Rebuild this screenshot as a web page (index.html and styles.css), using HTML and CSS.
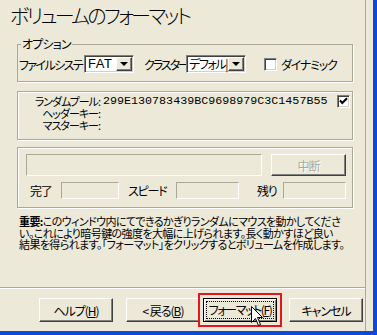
FILE: index.html
```html
<!DOCTYPE html>
<html lang="ja">
<head>
    <meta charset="UTF-8">
    <meta name="viewport" content="width=device-width, initial-scale=1.0">
    <title>ボリュームのフォーマット</title>
    <link rel="stylesheet" href="styles.css">
</head>
<body>
    <div class="window">
        <div class="page">
            <h1 class="title">ボリュームのフォーマット</h1>

            <fieldset class="options">
                <legend>オプション</legend>
                <div class="opt-row">
                    <span class="fs-lbl">ファイルシステ</span>
                    <div class="combo fat"><span class="combo-text latin">FAT</span><span class="combo-btn"></span></div>
                    <span class="cl-lbl">クラスター</span>
                    <div class="combo cluster"><span class="combo-text">デフォル|</span><span class="combo-btn"></span></div>
                    <span class="check dyn"></span>
                    <span class="dyn-lbl">ダイナミック</span>
                </div>
            </fieldset>

            <div class="group pool">
                <span class="key">ランダムプール:</span>
                <span class="hex">299E130783439BC9698979C3C1457B55</span>
                <span class="check">
                    <svg width="11" height="11" viewBox="0 0 11 11"><path d="M2 4.5 L4.3 7 L9 2.2" fill="none" stroke="#000" stroke-width="2"/></svg>
                </span>
                <span class="key">ヘッダーキー:</span>
                <span class="hex"></span>
                <span></span>
                <span class="key">マスターキー:</span>
                <span class="hex"></span>
                <span></span>
            </div>

            <div class="group progress">
                <div class="prog-row">
                    <div class="field bar"></div>
                    <button class="btn stop" disabled>中断</button>
                </div>
                <div class="stat-row">
                    <span class="stat-lbl done">完了</span>
                    <div class="field f-done"></div>
                    <span class="stat-lbl speed">スピード</span>
                    <div class="field f-speed"></div>
                    <span class="stat-lbl left">残り</span>
                    <div class="field f-left"></div>
                </div>
            </div>

            <p class="note"><span class="strong">重要:</span>このウィンドウ内にてできるかぎりランダムにマウスを動かしてくださ<br>い。これにより暗号鍵の強度を大幅に上げられます。長く動かすほど良い<br>結果を得られます。「フォーマット」をクリックするとボリュームを作成します。</p>

            <div class="footer">
                <button class="btn help">ヘルプ(<u>H</u>)</button>
                <button class="btn back">&lt; 戻る(<u>B</u>)</button>
                <button class="btn format"><span class="focus">フォーマット(<u>F</u>)</span></button>
                <button class="btn cancel">キャンセル</button>
            </div>
        </div>

        <svg class="cursor" width="13" height="21" viewBox="0 0 13 21">
            <path d="M0.5 0.5 L0.5 16.5 L4.5 12.5 L7.5 19.5 L9.5 18.5 L6.5 11.5 L11.5 11.5 Z" fill="#fff" stroke="#000" stroke-width="1"/>
        </svg>
    </div>
</body>
</html>
```

FILE: styles.css
```css
*{
    margin: 0px;
    padding: 0px;
    box-sizing: border-box;
}
body{
    font-family: "Noto Sans CJK JP", sans-serif;
    font-size: 12px;
    font-feature-settings: "palt";
    color: #000;
    background: #ECE9D8;
}
.window{
    position: relative;
    width: 377px;
    height: 335px;
    display: flex;
    background: #ECE9D8;
    border-right: 4px solid #0c4ad9;
    border-bottom: 4px solid #0c4ad9;
}
.page{
    width: 366px;
    height: 100%;
    display: flex;
    flex-direction: column;
    border-right: 1px solid #ACA899;
}
.title{
    font-size: 20px;
    font-weight: 300;
    line-height: 26px;
    padding: 3px 0 0 10px;
    letter-spacing: -2.6px;
    white-space: nowrap;
}

/* group boxes */
.options{
    margin: 8px 0 0 17px;
    width: 336px;
    border: 1px solid #ACA899;
    box-shadow: 1px 1px 0 #fff;
    padding: 4px 0 8px 1px;
}
.options legend{
    margin-left: 2px;
    padding: 0 1px;
    line-height: 14px;
    letter-spacing: -0.8px;
    background: #ECE9D8;
}
.group{
    margin-left: 17px;
    width: 336px;
    border: 1px solid #ACA899;
    box-shadow: 1px 1px 0 #fff, inset 1px 1px 0 #fff;
}

.opt-row{
    display: flex;
    align-items: center;
    height: 18px;
}
.fs-lbl{
    width: 65px;
    white-space: nowrap;
    letter-spacing: -1.6px;
}
.cl-lbl{
    width: 42px;
    margin-left: 10px;
    white-space: nowrap;
    letter-spacing: -2px;
}
.dyn-lbl{
    margin-left: 4px;
    letter-spacing: -1.2px;
}

.combo{
    height: 18px;
    display: flex;
    align-items: center;
    background: #fff;
    border: 1px solid;
    border-color: #808080 #fff #fff #808080;
    box-shadow: inset 1px 1px 0 #404040, inset -1px -1px 0 #D4D0C8;
    padding: 1px 1px 1px 2px;
}
.fat{ width: 50px; }
.cluster{ width: 60px; }
.combo-text{
    flex: 1;
    white-space: nowrap;
    line-height: 14px;
    letter-spacing: -1.4px;
}
.combo-text.latin{
    font-family: "Liberation Sans", sans-serif;
    font-size: 13px;
    letter-spacing: 0.5px;
    padding-left: 1px;
}
.combo-btn{
    width: 16px;
    height: 14px;
    flex: none;
    display: flex;
    justify-content: center;
    align-items: center;
    background: #ECE9D8;
    border: 1px solid;
    border-color: #fff #404040 #404040 #fff;
    box-shadow: inset -1px -1px 0 #808080;
}
.combo-btn::after{
    content: "";
    border-left: 4px solid transparent;
    border-right: 4px solid transparent;
    border-top: 4px solid #000;
}

.check{
    width: 13px;
    height: 13px;
    display: flex;
    justify-content: center;
    align-items: center;
    background: #fff;
    border: 1px solid;
    border-color: #808080 #fff #fff #808080;
    box-shadow: inset 1px 1px 0 #404040, inset -1px -1px 0 #D4D0C8;
}
.dyn{
    margin-left: 18px;
}

/* random pool */
.pool{
    margin-top: 9px;
    display: grid;
    grid-template-columns: 82px 1fr 13px;
    grid-auto-rows: 12px;
    column-gap: 3px;
    padding: 3px 2px 8px 0;
}
.key{
    text-align: right;
    white-space: nowrap;
    font-size: 11px;
    line-height: 12px;
    letter-spacing: -1px;
}
.hex{
    font-family: "Liberation Mono", monospace;
    font-size: 11.7px;
    line-height: 12px;
}

/* progress */
.progress{
    margin-top: 7px;
    padding: 6px 6px 8px 8px;
}
.prog-row{
    display: flex;
    gap: 9px;
    height: 22px;
}
.field{
    border: 1px solid;
    border-color: #ACA899 #fff #fff #ACA899;
}
.bar{ width: 236px; }
.stat-row{
    margin-top: 6px;
    display: flex;
    align-items: center;
    height: 17px;
}
.stat-row .field{ height: 17px; }
.stat-lbl{
    white-space: nowrap;
    letter-spacing: -1.2px;
}
.done{ width: 31px; margin-left: 4px; }
.f-done{ width: 58px; }
.speed{ width: 48px; margin-left: 9px; }
.f-speed{ width: 63px; }
.left{ width: 26px; margin-left: 18px; }
.f-left{ width: 63px; }

/* buttons */
.btn{
    width: 74px;
    height: 24px;
    font-family: "Noto Sans CJK JP", sans-serif;
    font-size: 12px;
    font-feature-settings: "palt";
    letter-spacing: -1px;
    white-space: nowrap;
    color: #000;
    background: #ECE9D8;
    border: 1px solid;
    border-color: #fff #404040 #404040 #fff;
    box-shadow: inset -1px -1px 0 #808080;
}
.stop{
    width: 75px;
    height: 22px;
    color: #ACA899;
    text-shadow: 1px 1px 0 #fff;
}

.note{
    margin: 8px 0 0 19px;
    font-size: 11px;
    line-height: 11.6px;
    white-space: nowrap;
    letter-spacing: -0.6px;
}
.note .strong{
    font-weight: bold;
}

.footer{
    margin-top: auto;
    height: 44px;
    display: flex;
    padding: 10px 0 0 39px;
    border-top: 1px solid #ACA899;
    box-shadow: inset 0 1px 0 #fff;
}
.back{ margin-left: 13px; }
.format{
    margin-left: 3px;
    border: 1px solid #000;
    box-shadow: inset 1px 1px 0 #fff, inset -1px -1px 0 #808080;
    outline: 2px solid #e8161b;
    outline-offset: 3px;
    padding: 2px;
}
.format .focus{
    display: block;
    height: 18px;
    line-height: 16px;
    letter-spacing: -1.4px;
    border: 1px dotted #000;
}
.cancel{ margin-left: 12px; }

.cursor{
    position: absolute;
    left: 251px;
    top: 306px;
}
```
